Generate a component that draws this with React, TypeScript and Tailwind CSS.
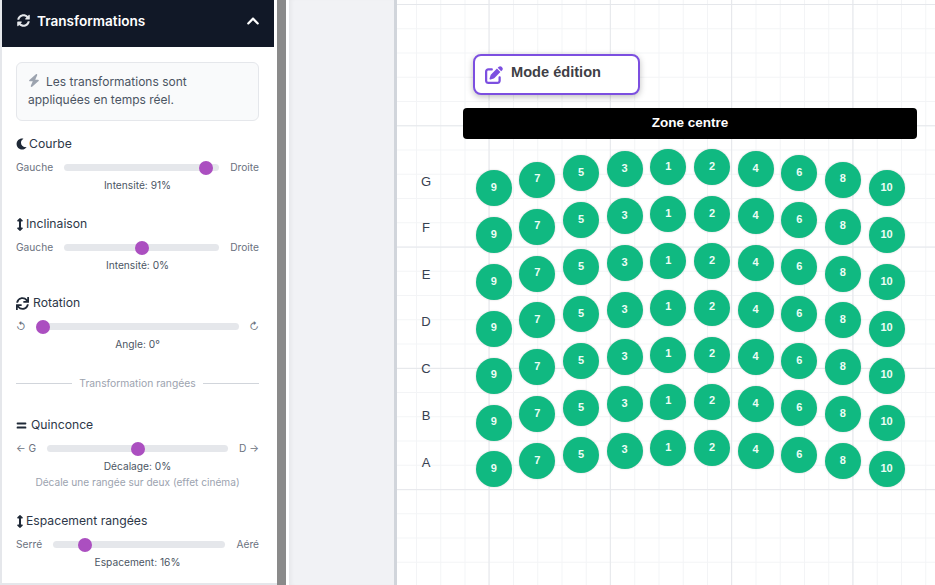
import type { ReactNode } from "react";
import { FaArrowsAltV, FaChevronUp, FaEquals, FaMoon, FaSync, FaSyncAlt } from "react-icons/fa";
import { FaBolt, FaPenToSquare } from "react-icons/fa6";

const rowLabels = ["G", "F", "E", "D", "C", "B", "A"];
const seatNumbers = [9, 7, 5, 3, 1, 2, 4, 6, 8, 10];
const curveY = [188, 179.7, 173.4, 169.3, 167, 167, 169.3, 173.4, 179.7, 188];

function Title({ icon, children }: { icon: ReactNode; children: ReactNode }) {
  return (
    <div className="flex h-[18px] items-center text-[12.2px] leading-[18px] text-[#2d3748]">
      {icon}
      <span>{children}</span>
    </div>
  );
}

function Slider({ left, right, percent, gap }: { left: string; right: string; percent: number; gap: string }) {
  return (
    <div className={`mt-[7.5px] flex h-[14px] items-center text-[10.2px] text-[#6b7280] ${gap}`}>
      <span className="whitespace-nowrap">{left}</span>
      <div className="relative h-[7px] flex-1 rounded-full bg-[#e5e7eb]">
        <div
          className="absolute top-1/2 h-[14px] w-[14px] -translate-x-1/2 -translate-y-1/2 rounded-full bg-[#ab4fc0]"
          style={{ left: `calc(7px + (100% - 14px) * ${percent / 100})` }}
        />
      </div>
      <span className="whitespace-nowrap">{right}</span>
    </div>
  );
}

function Caption({ children }: { children: ReactNode }) {
  return <div className="mt-[2.5px] h-[16px] text-center text-[10.2px] leading-[16px] text-[#4b5563]">{children}</div>;
}

function Sidebar() {
  return (
    <aside className="h-[585px] w-[277px] shrink-0 overflow-hidden border-b-2 border-l-2 border-[#e5e7eb] bg-white">
      <div className="mr-[3px] flex h-[47px] items-center justify-between bg-[#111827] pb-[5px] pl-[15px] pr-[14px] text-white">
        <div className="flex items-center gap-[7px]">
          <FaSyncAlt className="h-[13px] w-[13px] text-[#e5e7eb]" />
          <span className="text-[13.6px] font-semibold">Transformations</span>
        </div>
        <FaChevronUp className="h-[14px] w-[14px]" />
      </div>
      <div className="pl-[14px] pr-[18px]">
        <div className="mt-[15px] h-[59px] rounded-md border border-[#e5e7eb] bg-[#f9fafb] px-[11px] py-[9.5px] text-[12px] leading-[18.5px] text-[#4b5563]">
          <FaBolt className="mr-[6px] inline h-[13px] w-[12px] align-[-1px] text-[#9ca3af]" />
          Les transformations sont appliquées en temps réel.
        </div>
        <div className="mt-[14px]">
          <Title icon={<FaMoon className="mr-[2px] h-[12px] w-[11px] text-[#1f2937]" />}>Courbe</Title>
          <Slider left="Gauche" right="Droite" percent={95.5} gap="gap-[11px]" />
          <Caption>Intensité: 91%</Caption>
        </div>
        <div className="mt-[22px]">
          <Title icon={<FaArrowsAltV className="mr-[2px] h-[13px] w-[8px] text-[#1f2937]" />}>Inclinaison</Title>
          <Slider left="Gauche" right="Droite" percent={50} gap="gap-[11px]" />
          <Caption>Intensité: 0%</Caption>
        </div>
        <div className="mt-[21px]">
          <Title icon={<FaSync className="mr-[4px] h-[13px] w-[13px] text-[#1f2937]" />}>Rotation</Title>
          <Slider left="↺" right="↻" percent={0} gap="gap-[10px]" />
          <Caption>Angle: 0°</Caption>
        </div>
        <div className="mt-[24px] flex items-center gap-[7px] text-[10.3px] text-[#9ca3af]">
          <div className="h-px flex-1 bg-[#d1d5db]" />
          <span>Transformation rangées</span>
          <div className="h-px flex-1 bg-[#d1d5db]" />
        </div>
        <div className="mt-[25px]">
          <Title icon={<FaEquals className="mr-[4px] h-[11px] w-[11px] text-[#1f2937]" />}>Quinconce</Title>
          <Slider left="← G" right="D →" percent={50} gap="gap-[11px]" />
          <Caption>Décalage: 0%</Caption>
          <div className="text-center text-[10.15px] leading-[16px] text-[#9ca3af]">Décale une rangée sur deux (effet cinéma)</div>
        </div>
        <div className="mt-[22px]">
          <Title icon={<FaArrowsAltV className="mr-[2px] h-[13px] w-[8px] text-[#1f2937]" />}>Espacement rangées</Title>
          <Slider left="Serré" right="Aéré" percent={16} gap="gap-[11px]" />
          <Caption>Espacement: 16%</Caption>
        </div>
      </div>
    </aside>
  );
}

function Seat({ n, x, y }: { n: number; x: number; y: number }) {
  return (
    <div
      className="absolute flex h-[36px] w-[36px] -translate-x-1/2 -translate-y-1/2 items-center justify-center rounded-full bg-[#10b981] pb-[2px] text-[11px] font-bold text-[#ecfdf5] shadow-[0_0_2px_rgba(0,0,0,0.2)]"
      style={{ left: x, top: y }}
    >
      {n}
    </div>
  );
}

function Canvas() {
  return (
    <main className="relative h-[585px] flex-1 overflow-hidden bg-white font-['Liberation_Sans',sans-serif]">
      <div className="absolute inset-0 bg-[linear-gradient(to_right,#e5e7eb_1px,transparent_1px),linear-gradient(to_bottom,#e5e7eb_1px,transparent_1px),linear-gradient(to_right,#f3f4f6_1px,transparent_1px),linear-gradient(to_bottom,#f3f4f6_1px,transparent_1px)] bg-[size:121.3px_121.3px,121.3px_121.3px,24.26px_24.26px,24.26px_24.26px] bg-[position:91.5px_4px,91.5px_4px,19px_4px,19px_4px]" />

      <div className="absolute left-[76px] top-[54px] flex h-[41px] w-[167px] items-center gap-[8px] rounded-lg border-2 border-[#7c4fe0] bg-white pl-[10px] text-[14.6px] font-bold text-[#3f3f46] shadow-[0_2px_6px_rgba(0,0,0,0.25)]">
        <FaPenToSquare className="h-[18px] w-[18px] text-[#7c4fe0]" />
        <span className="pb-[3px]">Mode édition</span>
      </div>

      <div className="absolute left-[66.3px] top-[107.5px] flex h-[31.5px] w-[453.4px] items-center justify-center rounded bg-black text-[13.5px] font-bold text-white">
        Zone centre
      </div>

      {rowLabels.map((label, r) => (
        <div key={label} className="absolute left-[22px] w-[14px] text-center text-[13px] leading-[16px] text-[#374151]" style={{ top: 173.5 + r * 46.85 }}>
          {label}
        </div>
      ))}

      {rowLabels.map((label, r) =>
        seatNumbers.map((n, c) => (
          <Seat key={label + n} n={n} x={96.7 + c * 43.65} y={curveY[c] + r * 46.9} />
        )),
      )}
    </main>
  );
}

export default function App() {
  return (
    <div className="flex h-[585px] w-[935px] overflow-hidden bg-white font-['Inter',sans-serif]">
      <Sidebar />
      <div className="w-[9px] shrink-0 bg-[#8a8a8a]" />
      <div className="w-[3px] shrink-0 bg-white" />
      <div className="box-content w-[105px] shrink-0 border-r-[3px] border-[#d1d5db] bg-[#f1f2f5] shadow-[inset_4px_0_4px_-2px_rgba(0,0,0,0.05)]" />
      <Canvas />
    </div>
  );
}
